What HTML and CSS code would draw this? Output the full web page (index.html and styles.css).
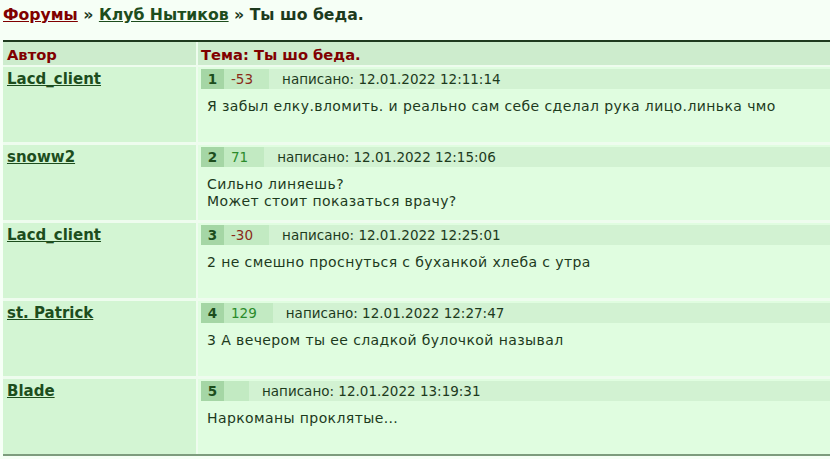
FILE: index.html
```html
<!DOCTYPE html>
<html lang="ru">
<head>
  <meta charset="UTF-8">
  <title>Ты шо беда.</title>
  <link rel="stylesheet" href="styles.css">
</head>
<body>

  <!-- Breadcrumbs -->
  <div class="crumbs">
    <a href="#" class="crumb-forums">Форумы</a> &raquo;
    <a href="#" class="crumb-club">Клуб Нытиков</a> &raquo;
    Ты шо беда.
  </div>

  <!-- Topic posts -->
  <div class="topic">
    <div class="row head">
      <div class="author">Автор</div>
      <div class="body">Тема: Ты шо беда.</div>
    </div>

    <div class="row">
      <div class="author"><a href="#">Lacd_client</a></div>
      <div class="body">
        <div class="post-bar">
          <span class="num">1</span><span class="rate neg">-53</span><span class="date">написано: 12.01.2022 12:11:14</span>
        </div>
        <div class="text">Я забыл елку.вломить. и реально сам себе сделал рука лицо.линька чмо</div>
      </div>
    </div>

    <div class="row">
      <div class="author"><a href="#">snoww2</a></div>
      <div class="body">
        <div class="post-bar">
          <span class="num">2</span><span class="rate pos">71</span><span class="date">написано: 12.01.2022 12:15:06</span>
        </div>
        <div class="text">Сильно линяешь?<br>Может стоит показаться врачу?</div>
      </div>
    </div>

    <div class="row">
      <div class="author"><a href="#">Lacd_client</a></div>
      <div class="body">
        <div class="post-bar">
          <span class="num">3</span><span class="rate neg">-30</span><span class="date">написано: 12.01.2022 12:25:01</span>
        </div>
        <div class="text">2 не смешно проснуться с буханкой хлеба с утра</div>
      </div>
    </div>

    <div class="row">
      <div class="author"><a href="#">st. Patrick</a></div>
      <div class="body">
        <div class="post-bar">
          <span class="num">4</span><span class="rate pos">129</span><span class="date">написано: 12.01.2022 12:27:47</span>
        </div>
        <div class="text">3 А вечером ты ее сладкой булочкой называл</div>
      </div>
    </div>

    <div class="row">
      <div class="author"><a href="#">Blade</a></div>
      <div class="body">
        <div class="post-bar">
          <span class="num">5</span><span class="rate"></span><span class="date">написано: 12.01.2022 13:19:31</span>
        </div>
        <div class="text">Наркоманы проклятые...</div>
      </div>
    </div>
  </div>

</body>
</html>
```

FILE: styles.css
```css
/* Page */
body {
  margin: 0 0 0 3px;
  background: #f6fff6;
  font-family: "DejaVu Sans", Verdana, sans-serif;
  font-size: 13.5px;
  color: #1d3a1d;
  overflow: hidden;
}

/* Breadcrumbs */
.crumbs {
  padding: 5px 0 0;
  height: 35px;
  box-sizing: border-box;
  font-size: 15.7px;
  font-weight: bold;
  color: #1d3a1d;
}

.crumbs a {
  color: #1d4d1d;
}

.crumbs .crumb-forums {
  color: #800000;
}

/* Topic table */
.topic {
  margin-top: 5px;
  border-top: 2px solid #1f3a1f;
  border-bottom: 2px solid #7d9c7d;
  background: #eefcee;
}

.row {
  display: flex;
  gap: 2px;
  height: 75px;
  margin-bottom: 3px;
}

.row:last-child {
  margin-bottom: 0;
}

.author {
  width: 193px;
  flex-shrink: 0;
  padding: 3px 4px;
  box-sizing: border-box;
  background: #d3f5d3;
}

.author a {
  font-size: 15px;
  font-weight: bold;
  color: #1d4d1d;
}

.body {
  flex: 1;
  padding: 2px 0 0 3px;
  background: #e0fde0;
}

/* Header row */
.row.head {
  height: 23px;
  margin-bottom: 2px;
}

.row.head .author,
.row.head .body {
  background: #cdeccd;
  color: #800000;
  font-size: 14.7px;
  font-weight: bold;
  padding: 4px 4px 0;
  box-sizing: border-box;
}

.row.head .body {
  padding-left: 3px;
}

/* Post header */
.post-bar {
  display: flex;
  align-items: center;
  height: 20px;
  background: #d2f2d2;
}

.num {
  width: 23px;
  height: 100%;
  line-height: 20px;
  text-align: center;
  font-weight: bold;
  color: #1d4d1d;
  background: #a5d6a5;
}

.rate {
  min-width: 2px;
  height: 100%;
  line-height: 20px;
  padding: 0 16px 0 7px;
  background: #c2eac2;
}

.rate.neg {
  color: #8a2a1a;
}

.rate.pos {
  color: #2b8a2b;
}

.date {
  margin-left: 13px;
  color: #1d3a1d;
}

.text {
  padding: 9px 6px 0;
  font-size: 14px;
  letter-spacing: 0.4px;
  line-height: 17px;
}
```
